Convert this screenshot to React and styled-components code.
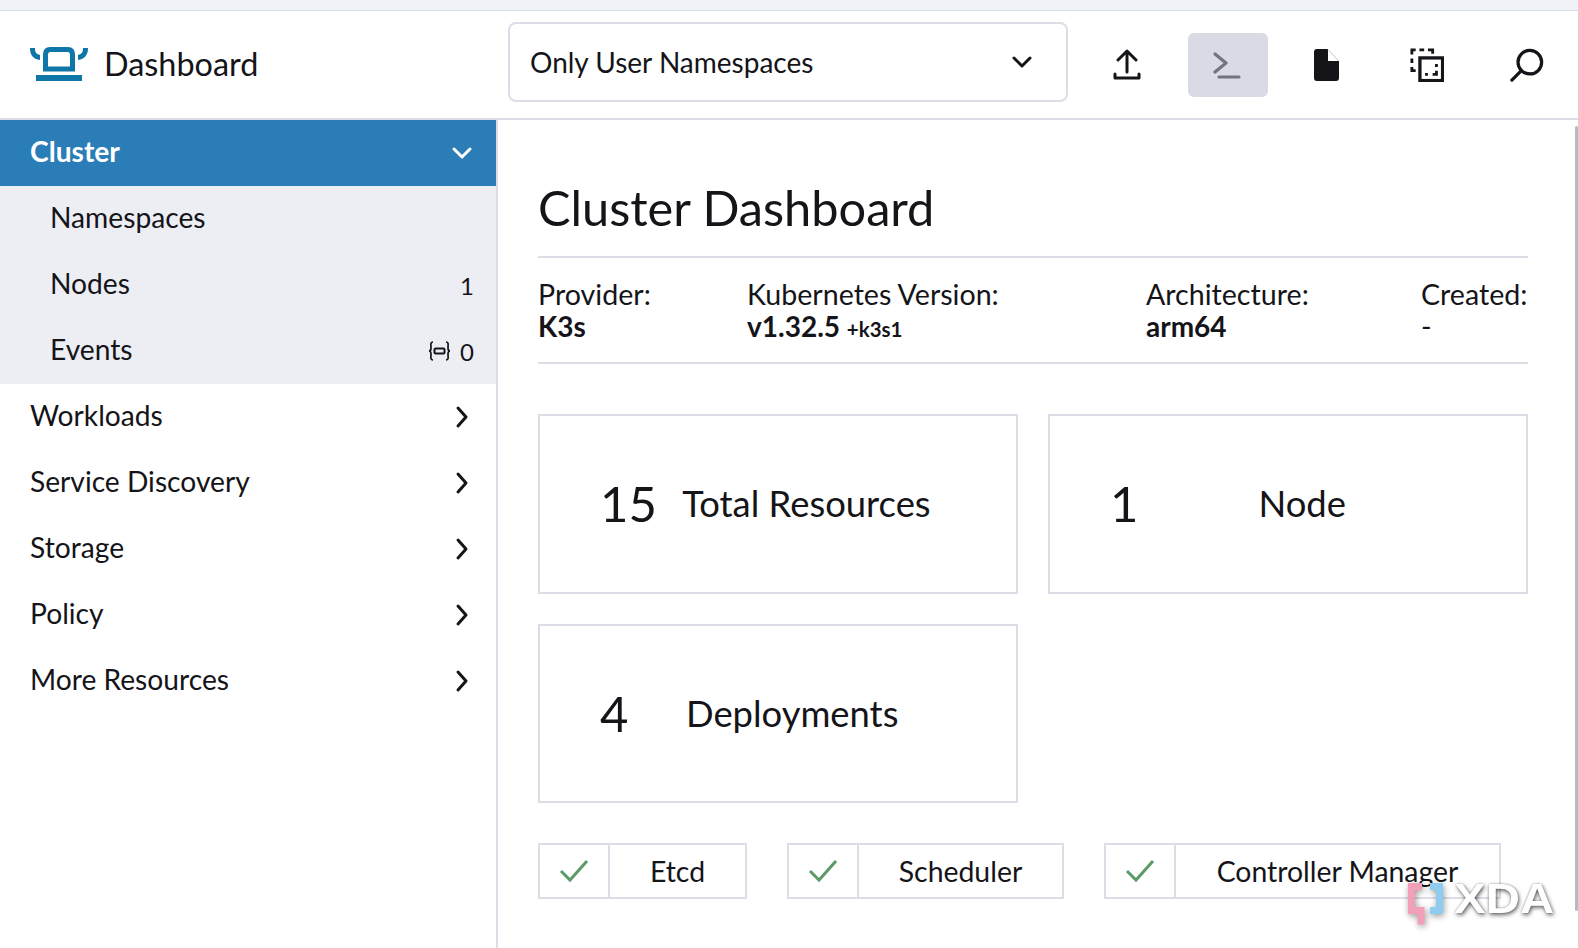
import styled, { createGlobalStyle } from "styled-components";

const GlobalStyle = createGlobalStyle`
  html, body {
    margin: 0;
    padding: 0;
    height: 948px;
    overflow: hidden;
    background: #fff;
    font-family: Lato, "Open Sans", sans-serif;
    color: #141419;
  }
`;

const Page = styled.div`
  position: relative;
  width: 1578px;
  height: 948px;
  overflow: hidden;
  display: flex;
  flex-direction: column;
`;

const BrowserStrip = styled.div`
  height: 10px;
  background: #eff3f8;
  border-bottom: 1px solid #dcdee7;
`;

const Header = styled.header`
  height: 107px;
  display: flex;
  align-items: center;
  border-bottom: 2px solid #dcdee7;
`;

const Brand = styled.div`
  width: 508px;
  padding: 0 0 3px 30px;
  box-sizing: border-box;
  display: flex;
  align-items: center;
  gap: 15px;
  font-size: 32.4px;
`;

const LogoSvg = styled.svg`
  margin-top: 3px;
`;

const NamespaceSelect = styled.div`
  width: 560px;
  height: 80px;
  margin-bottom: 6px;
  box-sizing: border-box;
  display: flex;
  align-items: center;
  justify-content: space-between;
  padding: 0 32px 0 20px;
  border: 2px solid #dcdee7;
  border-radius: 8px;
  font-size: 28px;
`;

const Actions = styled.div`
  margin-left: 20px;
  display: flex;
  gap: 20px;
`;

const ActionButton = styled.div`
  width: 80px;
  height: 64px;
  box-sizing: border-box;
  padding-right: 3px;
  display: flex;
  align-items: center;
  justify-content: center;
  border-radius: 6px;
  color: ${(p) => (p.$active ? "#71737f" : "#141419")};
  background: ${(p) => (p.$active ? "#d8dbe4" : "transparent")};
`;

const Body = styled.div`
  flex: 1;
  display: flex;
  min-height: 0;
`;

const Sidebar = styled.nav`
  width: 498px;
  flex-shrink: 0;
  box-sizing: border-box;
  border-right: 2px solid #dcdee7;
`;

const GroupHeader = styled.div`
  height: 66px;
  box-sizing: border-box;
  display: flex;
  align-items: center;
  justify-content: space-between;
  padding: 0 22px 0 30px;
  font-size: 28.2px;
  font-weight: ${(p) => (p.$open ? 700 : 400)};
  color: ${(p) => (p.$open ? "#fff" : "#141419")};
  background: ${(p) => (p.$open ? "#2a7db6" : "transparent")};
`;

const GroupLabel = styled.span`
  margin-top: -4px;
`;

const SubList = styled.div`
  background: #eceef4;
`;

const SubItem = styled.div`
  height: 66px;
  box-sizing: border-box;
  display: flex;
  align-items: center;
  justify-content: space-between;
  padding: 0 22px 4px 50px;
  font-size: 28.2px;
`;

const Count = styled.span`
  display: flex;
  align-items: center;
  gap: 9px;
  font-size: 24px;
  margin-top: 4px;
`;

const Main = styled.main`
  flex: 1;
  padding: 0 50px 0 40px;
`;

const Title = styled.h1`
  margin: 0;
  height: 138px;
  box-sizing: border-box;
  padding-top: 55px;
  font-size: 48.7px;
  line-height: 64px;
  font-weight: 400;
  border-bottom: 2px solid #dcdee7;
`;

const MetaRow = styled.div`
  height: 106px;
  box-sizing: border-box;
  padding-top: 3px;
  display: grid;
  grid-template-columns: 209px 399px 275px 1fr;
  align-content: center;
  border-bottom: 2px solid #dcdee7;
`;

const MetaItem = styled.div`
  font-size: 28.6px;
  line-height: 32px;
  white-space: nowrap;
`;

const MetaValue = styled.div`
  font-size: 28px;
  font-weight: 700;
`;

const MetaSuffix = styled.span`
  font-size: 20.5px;
`;

const CardGrid = styled.div`
  margin-top: 50px;
  display: grid;
  grid-template-columns: 480px 480px;
  grid-template-rows: 180px 179px;
  gap: 30px;
`;

const Card = styled.div`
  box-sizing: border-box;
  display: flex;
  align-items: center;
  padding: 0 60px 2px 60px;
  border: 2px solid #dcdee7;
`;

const CardNumber = styled.span`
  font-size: 49px;
`;

const CardLabel = styled.span`
  flex: 1;
  text-align: center;
  font-size: 36.4px;
`;

const StatusRow = styled.div`
  margin-top: 40px;
  display: flex;
  gap: 40px;
`;

const Status = styled.div`
  height: 56px;
  width: ${(p) => p.$width}px;
  box-sizing: border-box;
  display: flex;
  border: 2px solid #dcdee7;
`;

const StatusCheck = styled.div`
  width: 68px;
  display: flex;
  align-items: center;
  justify-content: center;
  border-right: 2px solid #dcdee7;
`;

const StatusName = styled.div`
  flex: 1;
  display: flex;
  align-items: center;
  justify-content: center;
  font-size: 28.4px;
  white-space: nowrap;
`;

const ScrollThumb = styled.div`
  position: absolute;
  right: 0;
  top: 126px;
  width: 3px;
  height: 785px;
  border-radius: 2px;
  background: #b9b9bf;
`;

const Watermark = styled.div`
  position: absolute;
  left: 1405px;
  top: 883px;
  display: flex;
  align-items: flex-start;
  gap: 11px;
`;

const XdaSvg = styled.svg`
  filter: drop-shadow(1px 2px 3px rgba(0, 0, 0, 0.4));
`;

const WatermarkText = styled.span`
  font-family: "Liberation Sans", sans-serif;
  font-weight: 700;
  font-size: 42px;
  line-height: 32px;
  transform: scaleX(1.13);
  transform-origin: left;
  color: #fff;
  text-shadow: 1px 2px 4px rgba(0, 0, 0, 0.6), 0 0 2px rgba(0, 0, 0, 0.35);
`;

const Chevron = ({ dir = "right", color = "#141419" }) => {
  const d = dir === "right" ? "M8 3l8 9-8 9" : "M4 8l8 8 8-8";
  return (
    <svg width="24" height="24" viewBox="0 0 24 24" fill="none" stroke={color} strokeWidth="3" strokeLinecap="round" strokeLinejoin="round">
      <path d={d} />
    </svg>
  );
};

const Logo = () => (
  <LogoSvg width="59" height="35" viewBox="0 0 59 35" fill="#0f76a8">
    <path d="M0 1h5c0 4 1 6 5 7v5C3 12 0 8 0 1zM58 1h-5c0 4-1 6-5 7v5c7-1 10-5 10-12z" />
    <path d="M20 2.500h18c3 0 4.500 2 4.500 5v14.500h-27V7.500c0-3 1.500-5 4.500-5z" fill="none" stroke="#0f76a8" strokeWidth="5" />
    <rect x="6" y="28" width="46" height="6" />
  </LogoSvg>
);

const UploadIcon = () => (
  <svg width="28" height="31" viewBox="0 0 28 31" fill="none" stroke="currentColor" strokeWidth="3" strokeLinecap="round" strokeLinejoin="round">
    <path d="M14 23V2M5 11l9-9 9 9M2 25v4h24v-4" />
  </svg>
);

const TerminalIcon = () => (
  <svg width="28" height="28" viewBox="0 0 28 28" fill="none" stroke="currentColor" strokeWidth="3.2" strokeLinecap="round" strokeLinejoin="round">
    <path d="M2 3l11 9L2 21M6 26h20" />
  </svg>
);

const FileIcon = () => (
  <svg width="25" height="32" viewBox="0 0 25 32" fill="currentColor">
    <path d="M3 0h11v12h11v17a3 3 0 0 1-3 3H3a3 3 0 0 1-3-3V3a3 3 0 0 1 3-3z" />
    <path d="M14 0.500L24.500 12" stroke="#c8c8cc" strokeWidth="1" fill="none" />
  </svg>
);

const CopyIcon = () => (
  <svg width="34" height="34" viewBox="0 0 36 36" fill="none" stroke="currentColor" strokeWidth="3">
    <path d="M2 20v4h4M2 16v-5M2 7V2h4M10 2h5M19 2h5v4" />
    <rect x="10.5" y="10.5" width="24" height="24" strokeWidth="3.5" />
    <path d="M16 28h3M24 28h4v-4M28 20v-3" />
  </svg>
);

const SearchIcon = () => (
  <svg width="34" height="34" viewBox="0 0 36 36" fill="none" stroke="currentColor" strokeWidth="3.4" strokeLinecap="round">
    <circle cx="21" cy="15" r="12.5" />
    <path d="M12 24L2 34" />
  </svg>
);

const EventIcon = () => (
  <svg width="23" height="20" viewBox="0 0 23 20" fill="none" stroke="#141419" strokeWidth="1.7">
    <path d="M5 1C2 1 3 4 3 7s-2 3-2 3 2 0 2 3-1 6 2 6M18 1c3 0 2 3 2 6s2 3 2 3-2 0-2 3 1 6-2 6" />
    <rect x="6.500" y="7.500" width="10" height="5" rx="1" strokeWidth="2" />
  </svg>
);

const CheckIcon = () => (
  <svg width="30" height="24" viewBox="0 0 30 24" fill="none" stroke="#5c9a68" strokeWidth="3">
    <path d="M2 12l9 9L28 2" />
  </svg>
);

const XdaMark = () => (
  <XdaSvg width="38" height="46" viewBox="0 0 38 46" fill="none" strokeWidth="7">
    <path d="M17 3.500H6.500v24h9.500v14" stroke="#f2a0b8" />
    <path d="M25 3.500h9.500v24H25" stroke="#8fcdf0" />
  </XdaSvg>
);

const closedGroups = ["Workloads", "Service Discovery", "Storage", "Policy", "More Resources"];

export default function App() {
  return (
    <Page>
      <GlobalStyle />
      <BrowserStrip />
      <Header>
        <Brand>
          <Logo />
          Dashboard
        </Brand>
        <NamespaceSelect>
          Only User Namespaces
          <Chevron dir="down" />
        </NamespaceSelect>
        <Actions>
          <ActionButton><UploadIcon /></ActionButton>
          <ActionButton $active><TerminalIcon /></ActionButton>
          <ActionButton><FileIcon /></ActionButton>
          <ActionButton><CopyIcon /></ActionButton>
          <ActionButton><SearchIcon /></ActionButton>
        </Actions>
      </Header>
      <Body>
        <Sidebar>
          <GroupHeader $open>
            <GroupLabel>Cluster</GroupLabel>
            <Chevron dir="down" color="#fff" />
          </GroupHeader>
          <SubList>
            <SubItem>Namespaces</SubItem>
            <SubItem>
              Nodes
              <Count>1</Count>
            </SubItem>
            <SubItem>
              Events
              <Count><EventIcon />0</Count>
            </SubItem>
          </SubList>
          {closedGroups.map((name) => (
            <GroupHeader key={name}>
              <GroupLabel>{name}</GroupLabel>
              <Chevron />
            </GroupHeader>
          ))}
        </Sidebar>
        <Main>
          <Title>Cluster Dashboard</Title>
          <MetaRow>
            <MetaItem>Provider:<MetaValue>K3s</MetaValue></MetaItem>
            <MetaItem>
              Kubernetes Version:
              <MetaValue>v1.32.5 <MetaSuffix>+k3s1</MetaSuffix></MetaValue>
            </MetaItem>
            <MetaItem>Architecture:<MetaValue>arm64</MetaValue></MetaItem>
            <MetaItem>Created:<div>-</div></MetaItem>
          </MetaRow>
          <CardGrid>
            <Card><CardNumber>15</CardNumber><CardLabel>Total Resources</CardLabel></Card>
            <Card><CardNumber>1</CardNumber><CardLabel>Node</CardLabel></Card>
            <Card><CardNumber>4</CardNumber><CardLabel>Deployments</CardLabel></Card>
          </CardGrid>
          <StatusRow>
            <Status $width={209}><StatusCheck><CheckIcon /></StatusCheck><StatusName>Etcd</StatusName></Status>
            <Status $width={277}><StatusCheck><CheckIcon /></StatusCheck><StatusName>Scheduler</StatusName></Status>
            <Status $width={397}><StatusCheck><CheckIcon /></StatusCheck><StatusName>Controller Manager</StatusName></Status>
          </StatusRow>
        </Main>
      </Body>
      <ScrollThumb />
      <Watermark>
        <XdaMark />
        <WatermarkText>XDA</WatermarkText>
      </Watermark>
    </Page>
  );
}
